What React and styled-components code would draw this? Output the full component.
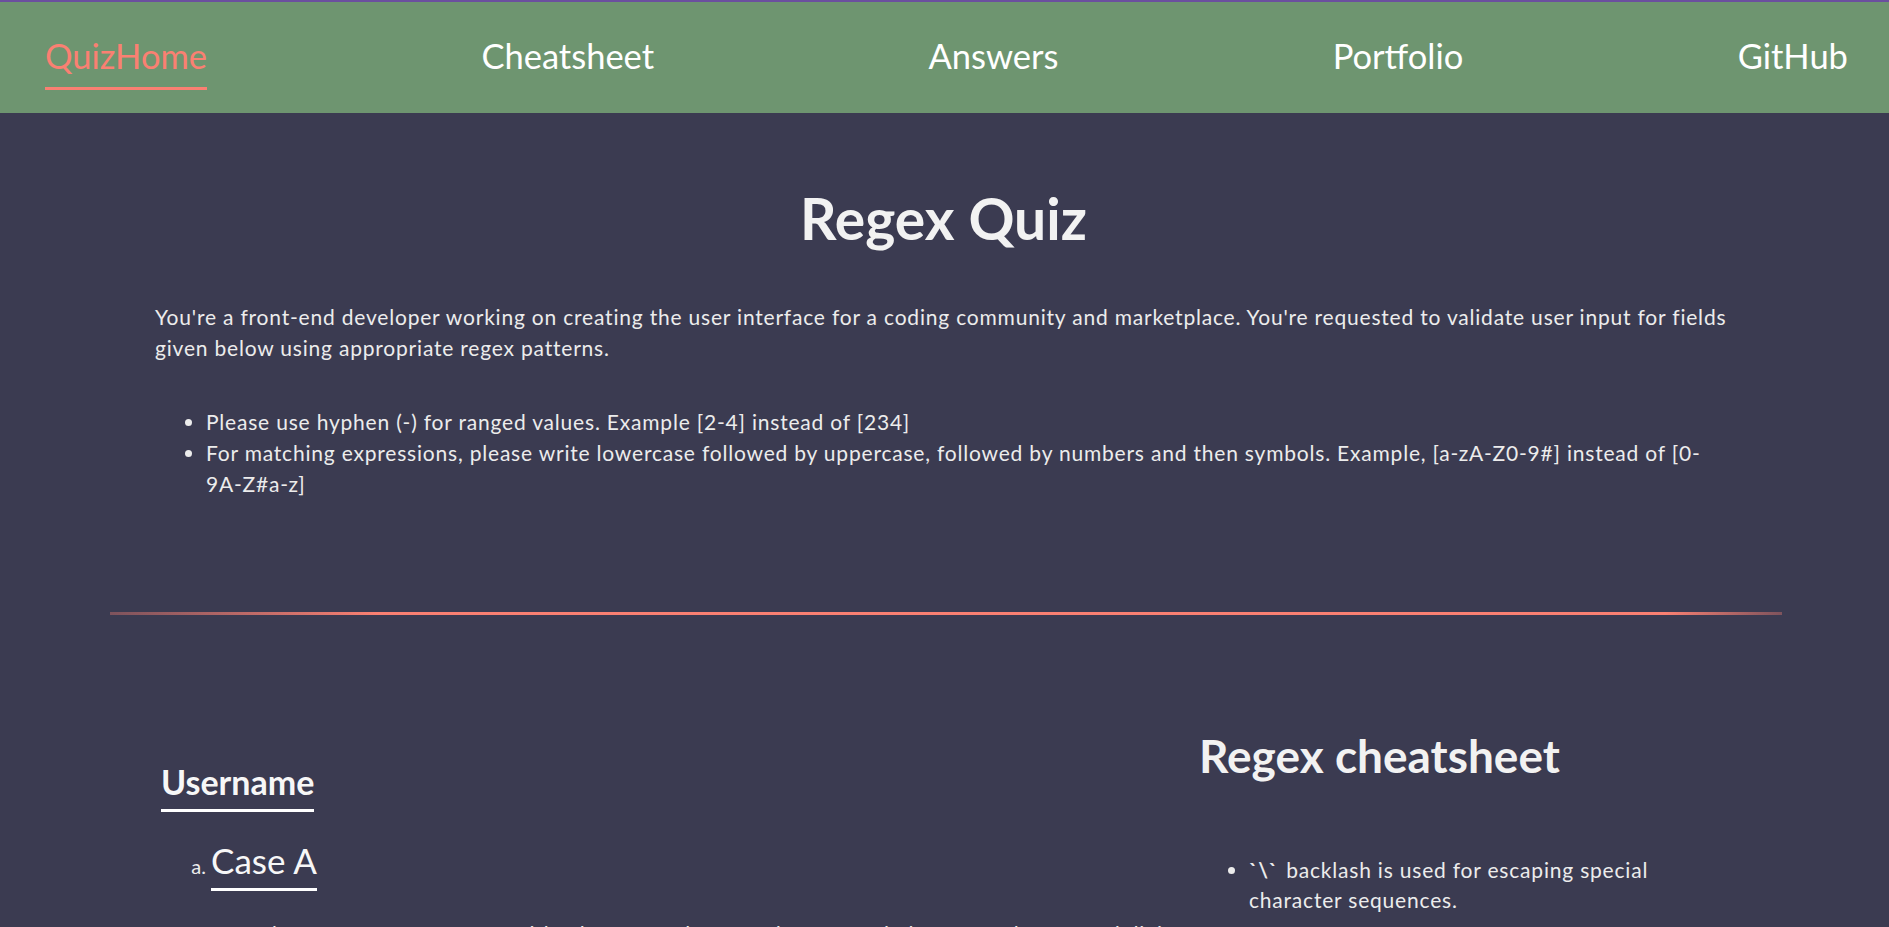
import React from "react";
import styled, {createGlobalStyle} from "styled-components";

const GlobalStyle = createGlobalStyle`
  body {
    margin: 0;
    background: #3b3b51;
    color: #ececec;
    font-family: Lato, "Noto Sans", sans-serif;
  }
`

const NavBar = styled.nav`
  height: 111px;
  border-top: 2px solid #6b4f9f;
  background: #6e9570;
  display: flex;
  align-items: center;
  justify-content: space-between;
  padding: 0 41px 0 45px;
`

const NavLink = styled.a`
  font-size: 34.5px;
  line-height: 42px;
  color: ${p => p.active ? '#fa8072' : '#ffffff'};
  text-decoration: none;
  padding-top: 10px;
  padding-bottom: 10px;
  border-bottom: 3px solid ${p => p.active ? '#fa8072' : 'transparent'};
  cursor: pointer;
`

const Intro = styled.section`
  padding: 0 157px 0 155px;
`

const Title = styled.h1`
  margin: 71px 0 0;
  text-align: center;
  font-size: 57px;
  line-height: 68px;
  font-weight: 700;
  color: #f2f2f2;
`

const Lead = styled.p`
  margin: 49px 0 0;
  font-size: 21px;
  letter-spacing: 0.8px;
  line-height: 31px;
`

const Rules = styled.ul`
  margin: 43px 0 0;
  padding-left: 51px;
  font-size: 21px;
  letter-spacing: 0.8px;
  line-height: 31px;
`

const Divider = styled.hr`
  margin: 113px 107px 0 110px;
  height: 3px;
  border: none;
  background: linear-gradient(to right, rgba(250, 128, 114, 0.35), #fa8072 16%, #fa8072 93%, rgba(250, 128, 114, 0.35));
`

const Columns = styled.div`
  display: grid;
  grid-template-columns: 1fr 535px;
  padding: 0 155px;
`

const QuizColumn = styled.div`
  padding-left: 6px;
  padding-top: 146px;
`

const FieldTitle = styled.h2`
  display: inline-block;
  margin: 0;
  font-size: 34px;
  line-height: 41px;
  font-weight: 700;
  padding-bottom: 7px;
  border-bottom: 3px solid #ffffff;
  color: #f7f7f7;
`

const Cases = styled.ol`
  list-style: lower-alpha;
  margin: 27px 0 0;
  padding-left: 50px;
  font-size: 20px;
`

const CaseItem = styled.li`
  &::marker {
    font-size: 20px;
  }
`

const CaseTitle = styled.h3`
  display: inline-block;
  margin: 0;
  font-size: 35px;
  line-height: 42px;
  font-weight: 400;
  padding-bottom: 7px;
  border-bottom: 3px solid #ffffff;
  color: #f7f7f7;
`

const CaseText = styled.p`
  margin: 27px 0 0 48px;
  font-size: 21px;
  letter-spacing: 0.8px;
  line-height: 31px;
`

const SheetColumn = styled.aside`
  padding-top: 113px;
`

const SheetTitle = styled.h2`
  margin: 0;
  font-size: 46px;
  line-height: 55px;
  font-weight: 700;
  color: #f2f2f2;
`

const SheetList = styled.ul`
  margin: 72px 0 0;
  padding-left: 50px;
  font-size: 21px;
  letter-spacing: 0.8px;
  line-height: 30px;
`

const Code = styled.code`
  font-family: inherit;
  font-weight: 700;
  margin-right: 2px;
`

const navItems = ['QuizHome', 'Cheatsheet', 'Answers', 'Portfolio', 'GitHub']

export default function App() {
    return (
        <>
            <GlobalStyle/>
            <NavBar>
                {navItems.map((item, idx) => <NavLink key={item} active={idx === 0}>{item}</NavLink>)}
            </NavBar>

            <Intro>
                <Title>Regex Quiz</Title>
                <Lead>
                    You're a front-end developer working on creating the user interface for a coding community and
                    marketplace. You're requested to validate user input for fields given below using appropriate regex
                    patterns.
                </Lead>
                <Rules>
                    <li>Please use hyphen (-) for ranged values. Example [2-4] instead of [234]</li>
                    <li>For matching expressions, please write lowercase followed by uppercase, followed by numbers and
                        then symbols. Example, [a-zA-Z0-9#] instead of [0-9A-Z#a-z]</li>
                </Rules>
            </Intro>

            <Divider/>

            <Columns>
                <QuizColumn>
                    <FieldTitle>Username</FieldTitle>
                    <Cases>
                        <CaseItem>
                            <CaseTitle>Case A</CaseTitle>
                            <CaseText>
                                The username must start with a lowercase letter and can contain lowercase letters
                                and digits.
                            </CaseText>
                        </CaseItem>
                    </Cases>
                </QuizColumn>
                <SheetColumn>
                    <SheetTitle>Regex cheatsheet</SheetTitle>
                    <SheetList>
                        <li><Code>`\`</Code> backlash is used for escaping special character sequences.</li>
                    </SheetList>
                </SheetColumn>
            </Columns>
        </>
    )
}
